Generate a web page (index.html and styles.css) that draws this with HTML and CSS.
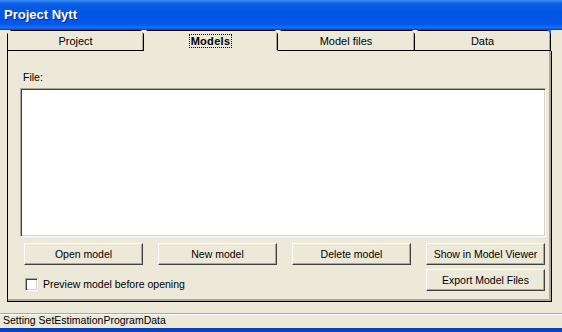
FILE: index.html
```html
<!DOCTYPE html>
<html lang="en">
<head>
  <meta charset="UTF-8" />
  <title>Project Nytt</title>
  <link rel="stylesheet" href="styles.css">
</head>
<body>
  <div class="window">
    <div class="titlebar">Project Nytt</div>

    <div class="tabs">
      <div class="tab first">Project</div>
      <div class="tab selected"><span class="focus">Models</span></div>
      <div class="tab">Model files</div>
      <div class="tab last">Data</div>
    </div>

    <div class="panel">
      <div class="label">File:</div>
      <div class="filebox"></div>

      <div class="actions">
        <button>Open model</button>
        <button>New model</button>
        <button>Delete model</button>
        <button>Show in Model Viewer</button>
        <label class="check"><span class="box"></span>Preview model before opening</label>
        <button class="export">Export Model Files</button>
      </div>
    </div>

    <div class="statusbar">Setting SetEstimationProgramData</div>
    <div class="frame-bottom"></div>
  </div>
</body>
</html>
```

FILE: styles.css
```css
html, body {
  margin: 0;
  padding: 0;
}
body {
  font-family: 'Liberation Sans', Arial, sans-serif;
  font-size: 10.5px;
  color: #000;
}
.window {
  width: 562px;
  height: 332px;
  background: #ece9d8;
  display: flex;
  flex-direction: column;
  overflow: hidden;
}
.titlebar {
  height: 30px;
  box-sizing: border-box;
  padding: 7px 0 0 4px;
  background: linear-gradient(to bottom, #3d8ff8 0%, #0c5fe6 12%, #0054e3 45%, #0058ec 80%, #1b6ef6 92%, #0a3fbf 100%);
  color: #fff;
  font-weight: bold;
  font-size: 13px;
  line-height: 16px;
  text-shadow: 1px 1px #0b2a8a;
}

/* tab strip */
.tabs {
  display: flex;
  margin-left: 7px;
  height: 21px;
}
.tab {
  position: relative;
  box-sizing: border-box;
  height: 21px;
  width: 137px;
  border-top: 1px solid #000;
  border-right: 1px solid #000;
  border-bottom: 1px solid #000;
  box-shadow: inset -1px 0 #aca899;
  text-align: center;
  font-size: 11px;
  line-height: 18px;
  padding-top: 1px;
}
.tab.first {
  border-left: 1px solid #000;
}
.tab.selected {
  width: 134px;
  border-bottom-color: #ece9d8;
  font-weight: bold;
}
.tab.last {
  width: 136px;
}
.tab::after {
  content: "";
  position: absolute;
  top: -1px;
  right: -4px;
  width: 0;
  height: 0;
  border-left: 3px solid transparent;
  border-right: 3px solid transparent;
  border-top: 4px solid #f4f2ea;
  z-index: 1;
}
.tab.last::after {
  right: -1px;
  border-left: 4px solid transparent;
  border-right: 0;
  border-top: 4px solid #1b6ef6;
}
.tab.first::before {
  content: "";
  position: absolute;
  top: -1px;
  left: -1px;
  width: 0;
  height: 0;
  border-right: 4px solid transparent;
  border-top: 4px solid #ece9d8;
}
.focus {
  border: 1px dotted #000;
  padding: 0 1px;
  letter-spacing: 0.3px;
}

/* page body */
.panel {
  width: 545px;
  height: 251px;
  box-sizing: border-box;
  margin-left: 7px;
  border: 1px solid #000;
  border-top: 0;
  box-shadow: inset -2px -2px #aca899;
  padding: 20px 0 0 12px;
}
.label {
  padding-left: 3px;
  line-height: 13px;
}
.filebox {
  width: 526px;
  height: 149px;
  box-sizing: border-box;
  margin-top: 4px;
  background: #fff;
  border: 1px solid;
  border-color: #aca899 #fff #fff #aca899;
  box-shadow: inset 1px 1px #404040, inset -1px -1px #d4d0c8;
}
.actions {
  display: grid;
  grid-template-columns: repeat(4, 119px);
  column-gap: 15px;
  row-gap: 4px;
  margin: 6px 0 0 4px;
}
button {
  height: 22px;
  box-sizing: border-box;
  padding: 0;
  font-family: inherit;
  font-size: 10.5px;
  color: #000;
  background: #ece9d8;
  border: 1px solid;
  border-color: #fff #404040 #404040 #fff;
  box-shadow: inset -1px -1px #aca899;
}
.export {
  grid-column: 4;
}
.check {
  grid-column: 1 / span 3;
  align-self: end;
  display: flex;
  align-items: center;
  gap: 5px;
  margin: 0 0 0 1px;
  line-height: 13px;
}
.box {
  width: 13px;
  height: 13px;
  box-sizing: border-box;
  background: #fff;
  border: 1px solid;
  border-color: #aca899 #fff #fff #aca899;
  box-shadow: inset 1px 1px #404040, inset -1px -1px #d4d0c8;
}

/* status */
.statusbar {
  margin-top: 11px;
  border-top: 1px solid #aca899;
  box-shadow: inset 0 1px #fff;
  height: 13px;
  padding: 0 0 1px 3px;
  line-height: 12px;
}
.frame-bottom {
  flex: 1;
  background: linear-gradient(to bottom, #0a3fbf, #0047d8);
}
```
